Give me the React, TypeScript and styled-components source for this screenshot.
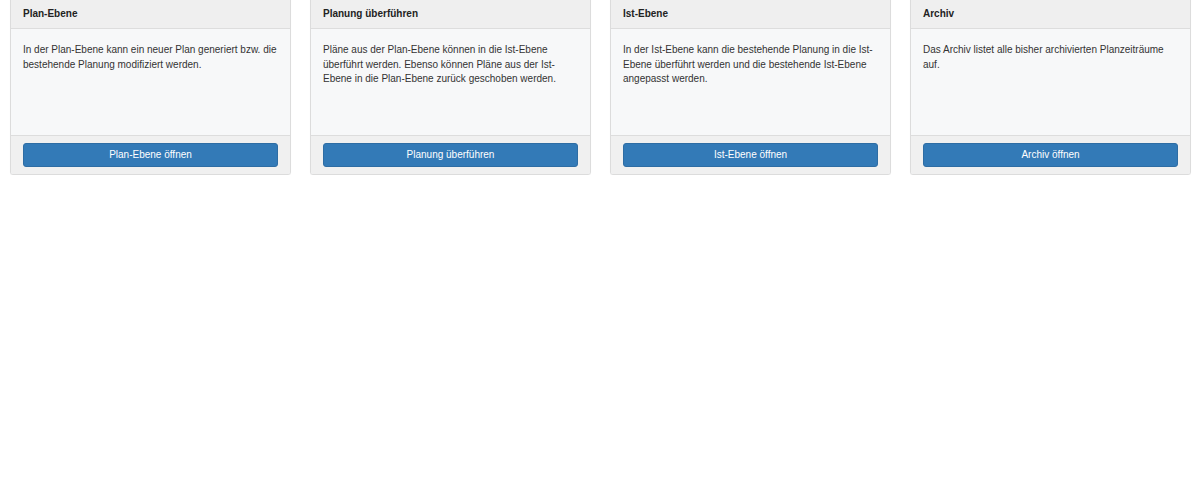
import React from "react";
import styled, { createGlobalStyle } from "styled-components";

const Global = createGlobalStyle`
  html, body { margin: 0; padding: 0; background: #fff; }
  body { font-family: "Liberation Sans", Arial, sans-serif; font-size: 10px; color: #333; overflow: hidden; }
`;

const Row = styled.div`
  display: grid;
  grid-template-columns: repeat(4, 281px);
  column-gap: 19px;
  padding-left: 10px;
  margin-top: -8px;
  align-items: stretch;
`;

const Card = styled.div`
  display: flex;
  flex-direction: column;
  border: 1px solid #dcdcdc;
  border-radius: 3px;
  background: #f7f8f9;
  box-shadow: 0 1px 1px rgba(0, 0, 0, 0.04);
  overflow: hidden;
`;

const Header = styled.div`
  background: #efefef;
  border-bottom: 1px solid #dddddd;
  padding: 13px 12px 7px;
  line-height: 15px;
  font-size: 10px;
  font-weight: bold;
  color: #222;
`;

const Body = styled.div`
  height: 106px;
  box-sizing: border-box;
  padding: 13.6px 12px 12px;
  line-height: 14.9px;
  font-size: 10px;
  color: #333;
  background: #f7f8f9;
`;

const Footer = styled.div`
  background: #f0f0f0;
  border-top: 1px solid #dddddd;
  padding: 7px 12px 7px;
`;

const Button = styled.button`
  display: block;
  width: 100%;
  height: 24px;
  border: 1px solid #2e6da4;
  border-radius: 3px;
  background: #337ab7;
  color: #fff;
  font-family: "Liberation Sans", Arial, sans-serif;
  font-size: 10px;
  line-height: 20px;
  padding: 0;
  cursor: pointer;
`;

const items = [
  {
    title: "Plan-Ebene",
    text: "In der Plan-Ebene kann ein neuer Plan generiert bzw. die bestehende Planung modifiziert werden.",
    button: "Plan-Ebene öffnen",
  },
  {
    title: "Planung überführen",
    text: "Pläne aus der Plan-Ebene können in die Ist-Ebene überführt werden. Ebenso können Pläne aus der Ist-Ebene in die Plan-Ebene zurück geschoben werden.",
    button: "Planung überführen",
  },
  {
    title: "Ist-Ebene",
    text: "In der Ist-Ebene kann die bestehende Planung in die Ist-Ebene überführt werden und die bestehende Ist-Ebene angepasst werden.",
    button: "Ist-Ebene öffnen",
  },
  {
    title: "Archiv",
    text: "Das Archiv listet alle bisher archivierten Planzeiträume auf.",
    button: "Archiv öffnen",
  },
];

export default function App() {
  return (
    <>
      <Global />
      <Row>
        {items.map((it) => (
          <Card key={it.title}>
            <Header>{it.title}</Header>
            <Body>{it.text}</Body>
            <Footer>
              <Button>{it.button}</Button>
            </Footer>
          </Card>
        ))}
      </Row>
    </>
  );
}
